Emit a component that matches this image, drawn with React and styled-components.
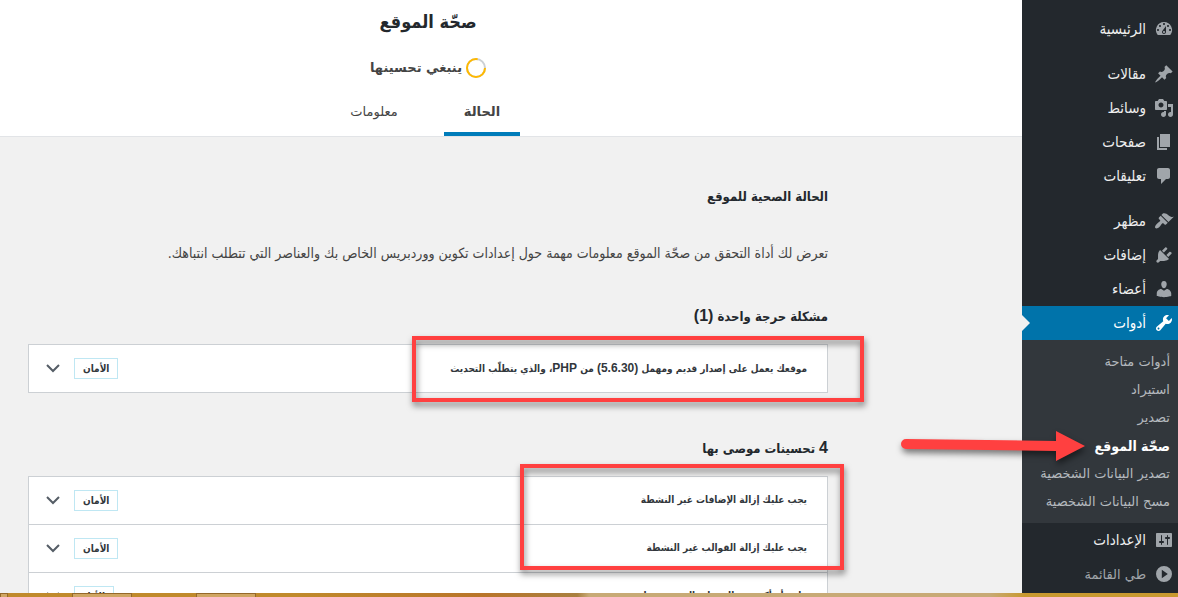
import React from "react";
import styled, { createGlobalStyle } from "styled-components";

const GlobalStyle = createGlobalStyle`
  * {
    box-sizing: border-box;
  }
  body {
    margin: 0;
    background: #f1f1f1;
    color: #444;
    font-family: "DejaVu Sans", sans-serif;
    font-size: 13px;
  }
`;

const condensed = `"DejaVu Sans Condensed", "DejaVu Sans", sans-serif`;

const icons = {
  dashboard:
    "M3.76 16h12.48A7.998 7.998 0 0 0 10 3a7.998 7.998 0 0 0-6.24 13zM10 4c.55 0 1 .45 1 1s-.45 1-1 1-1-.45-1-1 .45-1 1-1zM6 6c.55 0 1 .45 1 1s-.45 1-1 1-1-.45-1-1 .45-1 1-1zm8 0c.55 0 1 .45 1 1s-.45 1-1 1-1-.45-1-1 .45-1 1-1zm-5.37 5.55L12 7v6c0 1.1-.9 2-2 2s-2-.9-2-2c0-.57.24-1.08.63-1.45zM4 10c.55 0 1 .45 1 1s-.45 1-1 1-1-.45-1-1 .45-1 1-1zm12 0c.55 0 1 .45 1 1s-.45 1-1 1-1-.45-1-1 .45-1 1-1zm-5 3c0-.55-.45-1-1-1s-1 .45-1 1 .45 1 1 1 1-.45 1-1z",
  post: "M10.44 3.02l1.82-1.82 6.36 6.35-1.83 1.82c-1.05-.68-2.48-.57-3.41.36l-.75.75c-.92.93-1.04 2.35-.35 3.41l-1.83 1.82-2.41-2.41-2.8 2.79c-.42.42-3.38 2.71-3.8 2.29s1.86-3.39 2.28-3.81l2.79-2.79L4.1 9.36l1.83-1.82c1.05.69 2.48.57 3.4-.36l.75-.75c.93-.92 1.05-2.35.36-3.41z",
  media:
    "M13 11V4c0-.55-.45-1-1-1h-1.67L9 1H5L3.67 3H2c-.55 0-1 .45-1 1v7c0 .55.45 1 1 1h10c.55 0 1-.45 1-1zM7 4.5c1.38 0 2.5 1.12 2.5 2.5S8.38 9.5 7 9.5 4.5 8.38 4.5 7 5.62 4.5 7 4.5zM14 6h5v10.5c0 1.38-1.12 2.5-2.5 2.5S14 17.88 14 16.5s1.12-2.5 2.5-2.5c.17 0 .34.02.5.05V9h-3V6zm-4 8.05V13h2v3.5c0 1.38-1.12 2.5-2.5 2.5S7 17.88 7 16.5 8.12 14 9.5 14c.17 0 .34.02.5.05z",
  page: "M6 15V2h10v13H6zm-1 1h8v2H3V5h2v11z",
  comments:
    "M5 2h9c1.1 0 2 .9 2 2v7c0 1.1-.9 2-2 2h-2l-5 5v-5H5c-1.1 0-2-.9-2-2V4c0-1.1.9-2 2-2z",
  appearance:
    "M14.48 11.06L7.41 3.99l1.5-1.5c.5-.56 2.3-.47 3.51.32 1.21.8 1.43 1.28 2.91 2.1 1.18.64 2.45 1.26 4.45.85zm-.71.71L6.7 4.7 4.93 6.47c-.39.39-.39 1.02 0 1.41l1.06 1.06c.39.39.39 1.03 0 1.42-.6.6-1.43 1.11-2.21 1.69-.35.26-.7.53-1.01.84C1.43 14.23.4 16.08 1.4 17.07c.99 1 2.84-.03 4.18-1.36.31-.31.58-.66.85-1.02.57-.78 1.08-1.61 1.69-2.21.39-.39 1.02-.39 1.41 0l1.06 1.06c.39.39 1.02.39 1.41 0z",
  plugins:
    "M13.11 4.36L9.87 7.6 8 5.73l3.24-3.24c.35-.34 1.05-.2 1.56.32.52.51.66 1.21.31 1.55zm-8 1.77l.91-1.12 9.01 9.01-1.19.84c-.71.71-2.63 1.16-3.82 1.16H6.14L4.9 17.26c-.59.59-1.54.59-2.12 0-.59-.58-.59-1.53 0-2.12l1.24-1.24v-3.88c0-1.13.4-3.19 1.09-3.89zm7.26 3.97l3.24-3.24c.34-.35 1.04-.21 1.55.31.52.51.66 1.21.31 1.55l-3.24 3.25z",
  users:
    "M10 9.25c-2.27 0-2.73-3.44-2.73-3.44C7 4.02 7.82 2 9.97 2c2.16 0 2.98 2.02 2.71 3.81 0 0-.41 3.44-2.68 3.44zm0 2.57L12.72 10c2.39 0 4.52 2.33 4.52 4.53v2.49s-3.65 1.13-7.24 1.13c-3.65 0-7.24-1.13-7.24-1.13v-2.49c0-2.25 1.94-4.48 4.47-4.48z",
  tools:
    "M16.68 9.77c-1.34 1.34-3.3 1.67-4.95.99l-5.41 6.52c-.99.99-2.59.99-3.58 0s-.99-2.59 0-3.57l6.52-5.42c-.68-1.65-.35-3.61.99-4.95 1.28-1.28 3.12-1.62 4.72-1.06l-2.89 2.89 2.82 2.82 2.86-2.87c.53 1.58.18 3.39-1.08 4.65zM3.81 16.21c.4.39 1.04.39 1.43 0 .4-.4.4-1.04 0-1.43-.39-.4-1.03-.4-1.43 0-.39.39-.39 1.03 0 1.43z",
  settings:
    "M18 16V4c0-.55-.45-1-1-1H3c-.55 0-1 .45-1 1v12c0 .55.45 1 1 1h14c.55 0 1-.45 1-1zM8 11h1c.55 0 1 .45 1 1s-.45 1-1 1H8v1.5c0 .28-.22.5-.5.5s-.5-.22-.5-.5V13H6c-.55 0-1-.45-1-1s.45-1 1-1h1V5.5c0-.28.22-.5.5-.5s.5.22.5.5V11zm5-2h-1c-.55 0-1-.45-1-1s.45-1 1-1h1V5.5c0-.28.22-.5.5-.5s.5.22.5.5V7h1c.55 0 1 .45 1 1s-.45 1-1 1h-1v5.5c0 .28-.22.5-.5.5s-.5-.22-.5-.5V9z",
  collapse: "M10 2a8 8 0 1 1 0 16a8 8 0 1 1 0-16zM7.8 5.8v8.4l6-4.2z",
};

const menuGroups = [
  [{ icon: "dashboard", label: "الرئيسية" }],
  [
    { icon: "post", label: "مقالات" },
    { icon: "media", label: "وسائط" },
    { icon: "page", label: "صفحات" },
    { icon: "comments", label: "تعليقات" },
  ],
  [
    { icon: "appearance", label: "مظهر" },
    { icon: "plugins", label: "إضافات" },
    { icon: "users", label: "أعضاء" },
    { icon: "tools", label: "أدوات", active: true },
  ],
];

const toolLinks = [
  "أدوات متاحة",
  "استيراد",
  "تصدير",
  "صحّة الموقع",
  "تصدير البيانات الشخصية",
  "مسح البيانات الشخصية",
];
const currentTool = 3;

const critical = [
  {
    id: "php",
    title: (
      <>
        موقعك يعمل على إصدار قديم ومهمل <Latin>(5.6.30)</Latin> من{" "}
        <Latin>PHP</Latin>، والذي يتطلّب التحديث
      </>
    ),
    badge: "الأمان",
  },
];

const recommended = [
  { id: "plugins", title: "يجب عليك إزالة الإضافات غير النشطة", badge: "الأمان" },
  { id: "themes", title: "يجب عليك إزالة القوالب غير النشطة", badge: "الأمان" },
  {
    id: "modules",
    title: "واحد أو أكثر من الوحدات الموصى بها مفقودة",
    badge: "الأداء",
  },
];

function Latin({ large, children }) {
  return <LatinText $large={large}>{children}</LatinText>;
}

const Icon = ({ name }) => (
  <IconSvg viewBox="0 0 20 20" aria-hidden="true">
    <path d={icons[name]} fillRule="evenodd" />
  </IconSvg>
);

const Issues = ({ items, children }) => (
  <IssueList>
    {items.map((item) => (
      <IssueRow key={item.id} type="button" aria-expanded="false">
        <IssueTitle>{item.title}</IssueTitle>
        <Badge>{item.badge}</Badge>
        <Chevron viewBox="0 0 16 10" aria-hidden="true">
          <path d="M2 1l6 6 6-6" />
        </Chevron>
      </IssueRow>
    ))}
    {children}
  </IssueList>
);

export default function App() {
  return (
    <Screen dir="rtl" lang="ar">
      <GlobalStyle />
      <Admin>
        <Sidebar>
          {menuGroups.map((group, i) => (
            <MenuGroup key={i}>
              {group.map((item) => (
                <MenuLink key={item.label} href="#" $active={item.active}>
                  <Icon name={item.icon} />
                  {item.label}
                </MenuLink>
              ))}
            </MenuGroup>
          ))}
          <SubMenu>
            {toolLinks.map((label, i) => (
              <SubItem key={label}>
                <SubLink href="#" $current={i === currentTool}>
                  {label}
                </SubLink>
                {i === currentTool && (
                  <Arrow viewBox="0 0 200 44" aria-hidden="true">
                    <path d="M11 12L161 14V4L190 19L161 34V24L11 22A5 5 0 0 1 11 12z" />
                  </Arrow>
                )}
              </SubItem>
            ))}
          </SubMenu>
          <MenuLink href="#">
            <Icon name="settings" />
            الإعدادات
          </MenuLink>
          <CollapseButton type="button">
            <Icon name="collapse" />
            طي القائمة
          </CollapseButton>
        </Sidebar>

        <Main>
          <Header>
            <PageTitle>صحّة الموقع</PageTitle>
            <Progress>
              <Ring viewBox="0 0 20 20" aria-hidden="true">
                <circle cx="10" cy="10" r="9" stroke="#ccd0d4" />
                <circle
                  cx="10"
                  cy="10"
                  r="9"
                  stroke="#ffb900"
                  pathLength="100"
                  strokeDasharray="78 22"
                />
              </Ring>
              ينبغي تحسينها
            </Progress>
            <Tabs>
              <Tab href="#" $active>
                الحالة
              </Tab>
              <Tab href="#">معلومات</Tab>
            </Tabs>
          </Header>
          <Content>
            <SectionTitle>الحالة الصحية للموقع</SectionTitle>
            <Intro>
              تعرض لك أداة التحقق من صحّة الموقع معلومات مهمة حول إعدادات تكوين
              ووردبريس الخاص بك والعناصر التي تتطلب انتباهك.
            </Intro>
            <IssuesTitle>
              مشكلة حرجة واحدة <Latin large>(1)</Latin>
            </IssuesTitle>
            <Issues items={critical}>
              <Highlight $width={452} $height={66} $right={-37} $top={-9} />
            </Issues>
            <IssuesTitle>
              <Latin large>4</Latin> تحسينات موصى بها
            </IssuesTitle>
            <Issues items={recommended}>
              <Highlight $width={324} $height={106} $right={-17} $top={-13} />
            </Issues>
          </Content>
        </Main>
      </Admin>
      <Taskbar dir="ltr">
        <TaskSlot $width={8} />
        <TaskSlot $width={60} />
        <TaskSlot $width={60} />
      </Taskbar>
    </Screen>
  );
}

const Screen = styled.div`
  display: flex;
  flex-direction: column;
  height: 100vh;
  overflow: hidden;
`;

const Admin = styled.div`
  display: flex;
  flex: 1;
  min-height: 0;
  overflow: hidden;
`;

const LatinText = styled.bdi`
  font-family: "Liberation Sans", sans-serif;
  font-size: ${(props) => (props.$large ? "16px" : "12px")};
  line-height: 1;
`;

const Sidebar = styled.nav`
  position: relative;
  z-index: 1;
  flex: none;
  width: 156px;
  padding-top: 12px;
  background: #23282d;
`;

const MenuGroup = styled.div`
  & + & {
    margin-top: 11px;
  }
`;

const IconSvg = styled.svg`
  flex: none;
  width: 20px;
  height: 20px;
  fill: currentColor;
`;

const MenuLink = styled.a`
  position: relative;
  display: flex;
  align-items: center;
  gap: 8px;
  height: 34px;
  padding: 0 4px;
  background: ${(props) => (props.$active ? "#0073aa" : "transparent")};
  color: ${(props) => (props.$active ? "#fff" : "#eee")};
  font-family: ${condensed};
  font-size: 15px;
  text-decoration: none;

  ${IconSvg} {
    color: ${(props) => (props.$active ? "#fff" : "#a0a5aa")};
  }

  &::after {
    content: "";
    display: ${(props) => (props.$active ? "block" : "none")};
    position: absolute;
    left: 0;
    border: 8px solid transparent;
    border-right-width: 0;
    border-left-color: #f1f1f1;
  }
`;

const CollapseButton = styled.button`
  display: flex;
  align-items: center;
  gap: 8px;
  width: 100%;
  height: 34px;
  padding: 0 4px;
  border: 0;
  background: none;
  color: #a0a5aa;
  font: inherit;
`;

const SubMenu = styled.ul`
  margin: 0;
  padding: 8px 0 7px;
  background: #32373c;
  list-style: none;
`;

const SubItem = styled.li`
  position: relative;
`;

const SubLink = styled.a`
  display: block;
  padding: 0 8px;
  color: ${(props) => (props.$current ? "#fff" : "#b4b9be")};
  font: ${(props) => (props.$current ? `bold 14px ${condensed}` : "inherit")};
  line-height: 28px;
  text-decoration: none;
  white-space: nowrap;
`;

const Arrow = styled.svg`
  position: absolute;
  top: -5px;
  right: 83px;
  width: 200px;
  height: 44px;
  fill: #ff4040;
  filter: drop-shadow(1px 4px 3px rgba(0, 0, 0, 0.5));
  pointer-events: none;
`;

const Main = styled.main`
  flex: 1;
  min-width: 0;
`;

const Header = styled.header`
  display: flex;
  flex-direction: column;
  align-items: center;
  padding-right: 166px;
  border-bottom: 1px solid #e2e4e7;
  background: #fff;
`;

const PageTitle = styled.h1`
  margin: 0;
  padding-top: 4px;
  color: #23282d;
  font: bold 18px ${condensed};
  line-height: 36px;
`;

const Progress = styled.div`
  display: flex;
  align-items: center;
  gap: 4px;
  margin-top: 16px;
  font-weight: bold;
  line-height: 24px;
`;

const Ring = styled.svg`
  width: 20px;
  height: 20px;
  fill: none;
  stroke-width: 2px;
`;

const Tabs = styled.nav`
  display: flex;
  gap: 32px;
  margin-top: 8px;
`;

const Tab = styled.a`
  width: 76px;
  padding: 14px 0 10px;
  border-bottom: 4px solid ${(props) => (props.$active ? "#007cba" : "transparent")};
  color: #444;
  font-weight: ${(props) => (props.$active ? "bold" : "normal")};
  line-height: 20px;
  text-align: center;
  text-decoration: none;
`;

const Content = styled.div`
  max-width: 994px;
  margin-left: auto;
  padding-right: 194px;
`;

const SectionTitle = styled.h2`
  margin: 0;
  padding-top: 48px;
  color: #23282d;
  font: bold 13px ${condensed};
  line-height: 24px;
`;

const Intro = styled.p`
  margin: 36px 0 0;
  font: 14px ${condensed};
  line-height: 16px;
  white-space: nowrap;
`;

const IssuesTitle = styled.h3`
  margin: 0;
  padding: 44px 0 15px;
  color: #23282d;
  font: bold 13px ${condensed};
  line-height: 24px;
`;

const IssueList = styled.div`
  position: relative;
  border: 1px solid #ccd0d4;
  background: #fff;
`;

const IssueRow = styled.button`
  display: flex;
  align-items: center;
  width: 100%;
  height: 47px;
  padding: 0 20px 0 16px;
  border: 0;
  background: none;
  color: #32373c;
  font: bold 10px ${condensed};
  text-align: right;

  & + & {
    height: 48px;
    border-top: 1px solid #ccd0d4;
  }
`;

const IssueTitle = styled.span`
  flex: 1;
  padding-bottom: 2px;
  white-space: nowrap;
`;

const Badge = styled.span`
  padding: 0 8px;
  border: 1px solid #bfe7f3;
  line-height: 19px;
`;

const Chevron = styled.svg`
  width: 16px;
  height: 10px;
  margin-right: 13px;
  fill: none;
  stroke: #555d66;
  stroke-width: 2px;
`;

const Highlight = styled.div`
  position: absolute;
  top: ${(props) => props.$top}px;
  right: ${(props) => props.$right}px;
  width: ${(props) => props.$width}px;
  height: ${(props) => props.$height}px;
  border: 4px solid #ff4040;
  filter: drop-shadow(1px 4px 3px rgba(0, 0, 0, 0.5));
  pointer-events: none;
`;

const Taskbar = styled.footer`
  position: relative;
  z-index: 2;
  display: flex;
  gap: 64px;
  height: 4px;
  background: linear-gradient(
    to right,
    #c08a2c 0%,
    #c08a2c 25%,
    #b9752a 41%,
    #a98040 49%,
    #c8aa76 50%,
    #c8aa76 84%,
    #c8992f 87%,
    #c8992f 100%
  );
`;

const TaskSlot = styled.span`
  width: ${(props) => props.$width}px;
  border: 1px solid #96692a;
  border-bottom: 0;
  background: #d0a663;
`;
